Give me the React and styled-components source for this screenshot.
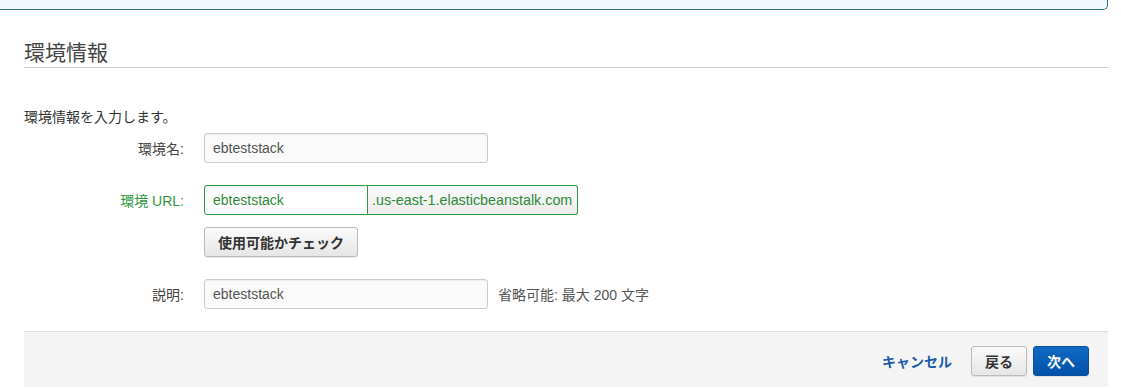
import React from "react";
import styled, { createGlobalStyle } from "styled-components";

const Global = createGlobalStyle`
  html, body { margin: 0; padding: 0; background: #fff; }
  body {
    font-family: "Liberation Sans", Arial, "Noto Sans CJK JP", sans-serif;
    font-size: 14px;
    color: #444;
    overflow: hidden;
  }
`;

const Page = styled.div`
  width: 1121px;
  height: 388px;
  padding-right: 13px;
  box-sizing: border-box;
  overflow: hidden;
`;

const TopPanel = styled.div`
  height: 9px;
  margin-left: -6px;
  background: #f0f8fd;
  border: 1px solid #2f6e96;
  border-top: none;
  border-radius: 0 0 5px 5px;
`;

const Section = styled.section`
  padding-left: 24px;
`;

const Heading = styled.h2`
  margin: 0;
  padding-top: 25px;
  height: 32px;
  line-height: 32px;
  font-size: 21px;
  font-weight: normal;
  color: #444;
  border-bottom: 1px solid #ccc;
  font-family: "Noto Sans CJK JP", sans-serif;
`;

const Intro = styled.p`
  margin: 40px 0 0;
  line-height: 18px;
  font-size: 14px;
  color: #333;
`;

const Form = styled.div`
  display: flex;
  flex-direction: column;
  margin-top: 7px;
`;

const Row = styled.div`
  display: grid;
  grid-template-columns: 160px auto auto;
  column-gap: 20px;
  align-items: center;
  justify-content: start;
  margin-top: ${(p) => p.$mt || 0}px;
`;

const Label = styled.label`
  text-align: right;
  color: ${(p) => (p.$ok ? "#2e9a3e" : "#444")};
  font-size: 14px;
`;

const TextInput = styled.div`
  box-sizing: border-box;
  width: ${(p) => p.$w}px;
  height: 30px;
  line-height: 28px;
  padding: 0 8px;
  border: 1px solid ${(p) => (p.$ok ? "#2e9a3e" : "#ccc")};
  border-radius: ${(p) => (p.$group ? "3px 0 0 3px" : "3px")};
  background: ${(p) => (p.$ok ? "#fff" : "#fafafa")};
  color: ${(p) => (p.$ok ? "#2e8a3a" : "#555")};
  box-shadow: inset 0 1px 1px rgba(0, 0, 0, 0.06);
  font-size: 14px;
`;

const Group = styled.div`
  display: flex;
`;

const Addon = styled.div`
  box-sizing: border-box;
  height: 30px;
  line-height: 28px;
  padding: 0 5px 0 4px;
  border: 1px solid #2e9a3e;
  border-left: none;
  border-radius: 0 3px 3px 0;
  background: linear-gradient(#fbfbfb, #ececec);
  color: #2e8a3a;
  font-size: 14.3px;
`;

const Spacer = styled.div``;

const Button = styled.button`
  box-sizing: border-box;
  height: 30px;
  padding: 0 ${(p) => p.$px || 12}px;
  border-radius: 3px;
  font-family: "Noto Sans CJK JP", "Liberation Sans", sans-serif;
  font-size: 14px;
  font-weight: bold;
  cursor: pointer;
  border: 1px solid ${(p) => (p.$primary ? "#09519e" : "#bbb")};
  color: ${(p) => (p.$primary ? "#fff" : "#333")};
  background: ${(p) =>
    p.$primary
      ? "linear-gradient(#1269c4, #0052a8)"
      : "linear-gradient(#fafafa, #e6e6e6)"};
  box-shadow: 0 1px 1px rgba(0, 0, 0, 0.08);
`;

const Hint = styled.span`
  color: #555;
  font-size: 14px;
  margin-left: -10px;
`;

const Footer = styled.div`
  margin-top: 22px;
  height: 56px;
  border-top: 1px solid #ddd;
  background: #f4f4f4;
  display: flex;
  align-items: flex-start;
  justify-content: flex-end;
  padding: 14px 19px 0 0;
  box-sizing: border-box;
  gap: 6px;
`;

const CancelLink = styled.a`
  font-family: "Noto Sans CJK JP", sans-serif;
  color: #1a5ca8;
  font-weight: bold;
  font-size: 14px;
  line-height: 30px;
  text-decoration: none;
  margin-right: 13px;
`;

export default function App() {
  return (
    <Page>
      <Global />
      <TopPanel />
      <Section>
        <Heading>環境情報</Heading>
        <Intro>環境情報を入力します。</Intro>
        <Form>
          <Row>
            <Label>環境名:</Label>
            <TextInput $w={284}>ebteststack</TextInput>
          </Row>
          <Row $mt={22}>
            <Label $ok>環境 URL:</Label>
            <Group>
              <TextInput $w={164} $ok $group>ebteststack</TextInput>
              <Addon>.us-east-1.elasticbeanstalk.com</Addon>
            </Group>
          </Row>
          <Row $mt={12}>
            <Spacer />
            <div>
              <Button $px={13}>使用可能かチェック</Button>
            </div>
          </Row>
          <Row $mt={22}>
            <Label>説明:</Label>
            <TextInput $w={284}>ebteststack</TextInput>
            <Hint>省略可能: 最大 200 文字</Hint>
          </Row>
        </Form>
        <Footer>
          <CancelLink href="#">キャンセル</CancelLink>
          <Button $px={13}>戻る</Button>
          <Button $primary $px={13}>次へ</Button>
        </Footer>
      </Section>
    </Page>
  );
}
